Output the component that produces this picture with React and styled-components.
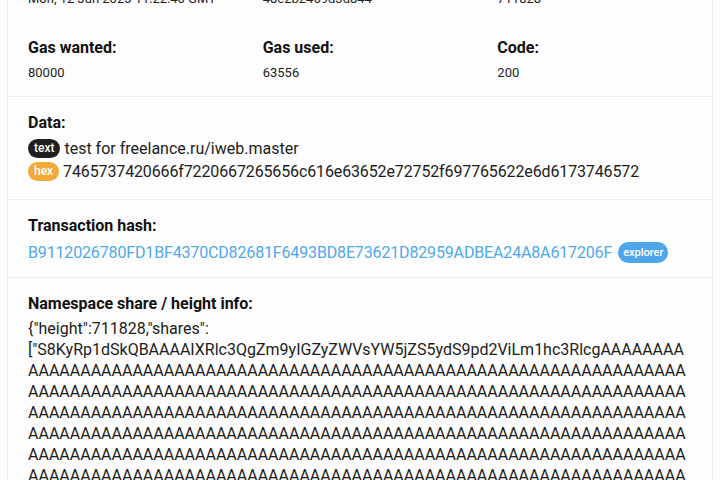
import React from "react"
import styled, { createGlobalStyle } from "styled-components"

const GlobalStyle = createGlobalStyle`
  html, body {
    margin: 0;
    padding: 0;
    background: #fff;
    overflow: hidden;
  }
  body {
    font-family: Roboto, "Liberation Sans", Arial, sans-serif;
    color: #222;
  }
`

const Page = styled.div`
  padding: 0 7px;
  margin-top: -53px;
`
const Card = styled.div`
  background: #fdfdfd;
  border: 1px solid #ebebeb;
  border-radius: 2px;
`
const Section = styled.section`
  padding: 15px 20px ${props => props.bottom || 15}px;
  border-top: 1px solid #ebebeb;
  &:first-child {
    border-top: none;
  }
  &.grid {
    padding-left: 0;
    padding-right: 0;
  }
`
const Grid = styled.div`
  display: grid;
  grid-template-columns: repeat(3, 1fr);
  row-gap: 30px;
`
const Cell = styled.div`
  padding: 0 20px;
  min-width: 0;
`
const Label = styled.div`
  font-size: 16px;
  font-weight: 700;
  line-height: 21px;
  color: #111;
  margin-bottom: ${props => props.gap || 5}px;
`
const Value = styled.div`
  font-size: 13px;
  line-height: 17px;
  color: #222;
  white-space: nowrap;
`
const Line = styled.div`
  font-size: 16px;
  line-height: 23px;
  color: #1c1c1c;
  overflow-wrap: anywhere;
`
const Tight = styled.span`
  letter-spacing: -0.13px;
`
const Json = styled.div`
  font-size: 16px;
  line-height: 21px;
  color: #1c1c1c;
  overflow-wrap: anywhere;
`
const Badge = styled.span`
  display: inline-block;
  vertical-align: middle;
  height: 19px;
  line-height: 19px;
  padding: 0 6px;
  border-radius: 10px;
  font-size: 12px;
  font-weight: 500;
  color: #fff;
  background: ${props => props.bg || "#1f1f1f"};
  margin-top: -3px;
`
const HashLink = styled.a`
  color: #4fa9e8;
  text-decoration: none;
  font-size: 16px;
  letter-spacing: -0.15px;
`
const Explorer = styled.a`
  display: inline-block;
  vertical-align: middle;
  height: 21px;
  line-height: 21px;
  padding: 0 5px;
  margin-left: 6px;
  margin-top: -3px;
  border-radius: 11px;
  background: #4da6ec;
  color: #fff;
  font-size: 11px;
  font-weight: 500;
  text-decoration: none;
`

const facts = [
  ["Time:", "Mon, 12 Jun 2023 11:22:40 GMT"],
  ["Signer:", "48e2b2469d3d844"],
  ["Height:", "711828"],
  ["Gas wanted:", "80000"],
  ["Gas used:", "63556"],
  ["Code:", "200"],
]

const shares =
  "S8KyRp1dSkQBAAAAIXRlc3QgZm9yIGZyZWVsYW5jZS5ydS9pd2ViLm1hc3RlcgAAAAAAAAA" +
  "A".repeat(700)

const App = () => {
  return (
    <>
      <GlobalStyle />
      <Page>
        <Card>
          <Section className="grid">
            <Grid>
              {facts.map(([label, value]) => (
                <Cell key={label}>
                  <Label gap={6}>{label}</Label>
                  <Value>{value}</Value>
                </Cell>
              ))}
            </Grid>
          </Section>
          <Section bottom={16}>
            <Label gap={4}>Data:</Label>
            <Line>
              <Badge>text</Badge> test for freelance.ru/iweb.master
            </Line>
            <Line>
              <Badge bg="#f1aa38">hex</Badge>{" "}
              <Tight>7465737420666f7220667265656c616e63652e72752f697765622e6d6173746572</Tight>
            </Line>
          </Section>
          <Section bottom={13}>
            <Label gap={5}>Transaction hash:</Label>
            <Line>
              <HashLink href="#">
                B9112026780FD1BF4370CD82681F6493BD8E73621D82959ADBEA24A8A617206F
              </HashLink>
              <Explorer href="#">explorer</Explorer>
            </Line>
          </Section>
          <Section>
            <Label gap={4}>Namespace share / height info:</Label>
            <Json>{`{"height":711828,"shares":["${shares}"]}`}</Json>
          </Section>
        </Card>
      </Page>
    </>
  )
}

export default App
